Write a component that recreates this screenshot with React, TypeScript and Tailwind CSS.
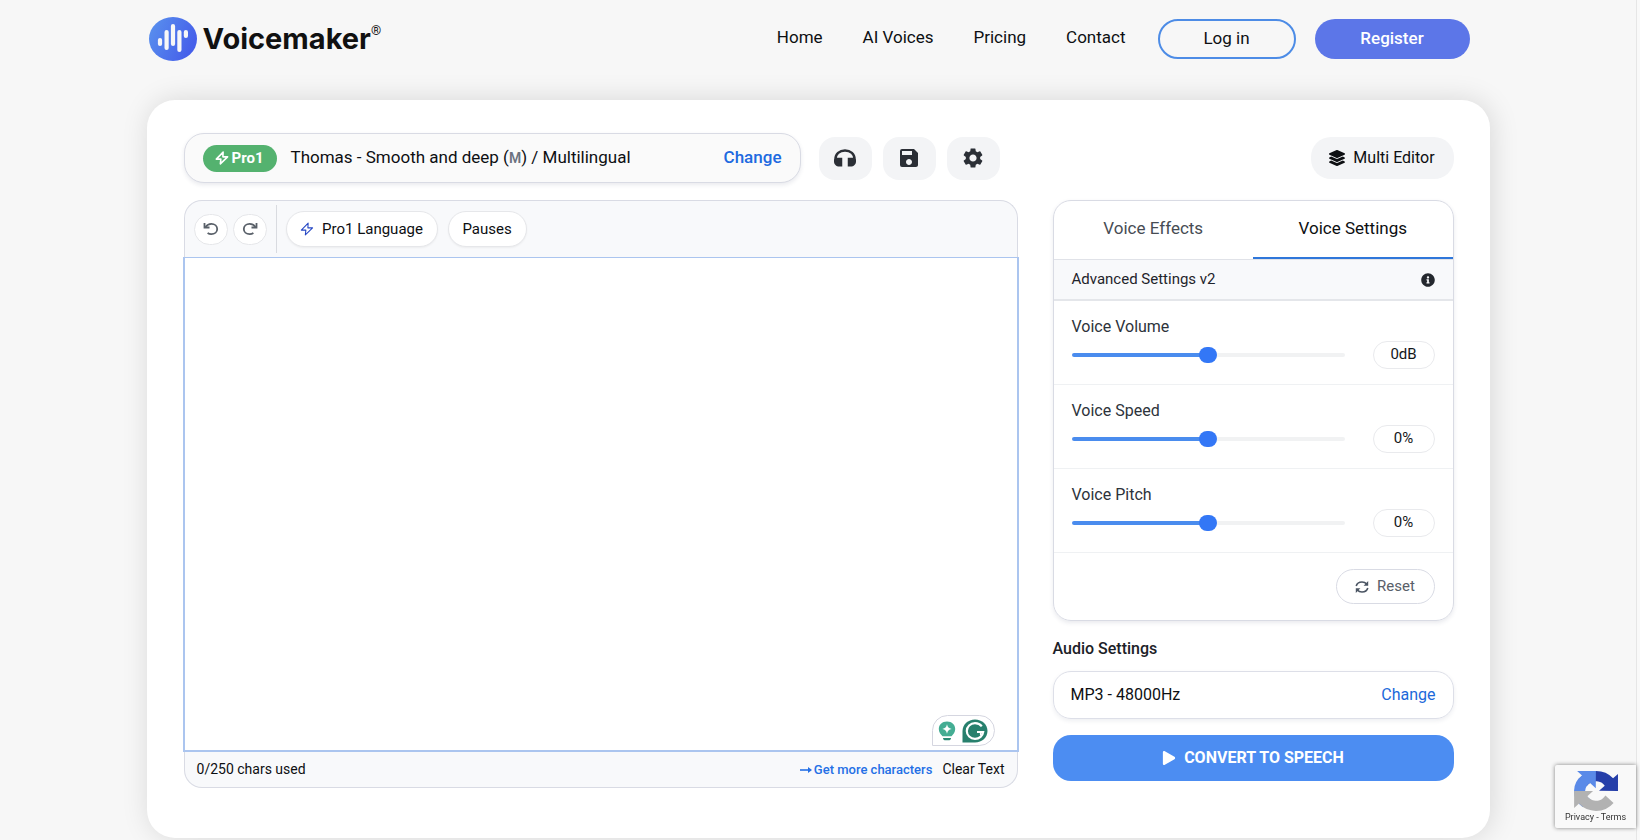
import { useState } from "react";
import type { ReactNode } from "react";
import { MdSave, MdSettings } from "react-icons/md";
import { FaLayerGroup, FaInfoCircle, FaPlay } from "react-icons/fa";

function LogoMark() {
  return (
    <svg viewBox="0 0 48 44" className="h-11 w-12" aria-hidden="true">
      <defs>
        <linearGradient id="mark" x1="0" y1="0" x2="1" y2="0.4">
          <stop offset="0" stopColor="#5a93ee" />
          <stop offset="1" stopColor="#4660ea" />
        </linearGradient>
      </defs>
      <ellipse cx="24" cy="22" rx="24" ry="22" fill="url(#mark)" />
      <g stroke="#f7f7f7" strokeWidth="4.2" strokeLinecap="round">
        <path d="M11 23v4" />
        <path d="M17.600 15v16" />
        <path d="M24 9v18" />
        <path d="M30.400 15v18" />
        <path d="M36.900 15v4" />
      </g>
    </svg>
  );
}

function Bolt({ className }: { className: string }) {
  return (
    <svg viewBox="0 0 16 16" className={className} fill="none" stroke="currentColor" strokeLinejoin="round" aria-hidden="true">
      <path d="M9.300 1.300 1.500 9.300h5.200l-.6 5.400 8.300-8H9z" />
    </svg>
  );
}

function HeadphonesIcon() {
  return (
    <svg viewBox="0 0 64 52" className="h-[18px] w-[22px]" aria-hidden="true">
      <path d="M4 36V30C4 15 16 4 32 4s28 11 28 26v6" fill="none" stroke="currentColor" strokeWidth="7" />
      <path d="M8 25h16v26h-8C6 51 0 44 0 36v-5zM56 25H40v26h8c10 0 16-7 16-15v-5z" fill="currentColor" />
    </svg>
  );
}

function UndoIcon({ flip }: { flip?: boolean }) {
  return (
    <svg viewBox="0 0 16 14" className={flip ? "h-3.5 w-4 -scale-x-100" : "h-3.5 w-4"} fill="none" stroke="#596069" strokeWidth="1.800" aria-hidden="true">
      <path d="M1.500 1v4.500H6.500" />
      <path d="M2.500 5C4 2.800 6 1.800 8.300 1.800c3.500 0 5.900 2.300 5.900 5.200s-2.400 5.200-5.900 5.200c-1.500 0-2.700-.4-3.700-1.100" />
    </svg>
  );
}

function RefreshIcon() {
  return (
    <svg viewBox="0 0 14 13" className="h-3.5 w-3.5" fill="none" stroke="#4b5563" strokeWidth="1.600" aria-hidden="true">
      <path d="M1.200 5.500C1.900 3 4.200 1.500 7 1.500c2 0 3.600.8 4.700 2.100" />
      <path d="M12.800 7.500c-.7 2.500-3 4-5.800 4-2 0-3.600-.8-4.700-2.100" />
      <path d="M13.200.6v4.600H8.600zM.8 12.400V7.800h4.600z" fill="#4b5563" stroke="none" />
    </svg>
  );
}

function BulbIcon() {
  return (
    <svg viewBox="0 0 18 20" className="h-5 w-4.5" aria-hidden="true">
      <path d="M9 .5C4 .5.8 3.800.8 8c0 3.400 2 5.300 3.700 7.200h9C15.200 13.300 17.200 11.400 17.200 8 17.200 3.800 14 .5 9 .5z" fill="#44ad93" />
      <path d="M9 3.300c.7 3 1.700 4 4.700 4.700-3 .7-4 1.700-4.700 4.700C8.300 9.700 7.300 8.700 4.300 8 7.300 7.300 8.300 6.300 9 3.300z" fill="#fff" />
      <path d="M5 17h8c0 1.500-1 2.300-2.500 2.300h-3C6 19.300 5 18.500 5 17z" fill="#2a8a74" />
    </svg>
  );
}

function GrammarIcon() {
  return (
    <svg viewBox="0 0 26 24" className="h-6 w-6.5" aria-hidden="true">
      <path d="M13 .5C20 .5 25.500 5.500 25.500 12S20 23.500 13 23.500H.5V12C.5 5.500 6 .5 13 .5z" fill="#27806d" />
      <path d="M19.800 7.300C18.200 5.200 15.800 4.200 13 4.200c-4.600 0-8.200 3.400-8.200 7.800s3.600 7.800 8.200 7.800c4.300 0 7.800-2.900 8.200-6.800h-6.200" fill="none" stroke="#fff" strokeWidth="2.200" />
      <path d="M18.800 12.500v3.800" stroke="#fff" strokeWidth="1.800" />
    </svg>
  );
}

function RecaptchaIcon() {
  return (
    <svg viewBox="0 0 64 64" className="h-10 w-11" preserveAspectRatio="none" aria-hidden="true">
      <path d="M64 31.950a32 32 0 0 0-.03-1.380V4.600l-7.180 7.180A31.950 31.950 0 0 0 32.060.060a31.940 31.940 0 0 0-25.430 12.600l11.770 11.900a15.600 15.600 0 0 1 4.770-5.350c2.060-1.600 4.970-2.920 8.900-2.920.47 0 .84.060 1.110.160 4.860.380 9.080 3.070 11.560 6.960l-8.330 8.330z" fill="#263fa9" />
      <path d="M31.860.060a32 32 0 0 0-1.380.03H4.520l7.180 7.180A31.950 31.950 0 0 0 0 32a31.940 31.940 0 0 0 12.600 25.430l11.900-11.770a15.600 15.600 0 0 1-5.350-4.770c-1.600-2.060-2.920-4.970-2.920-8.900 0-.47.060-.84.160-1.110.38-4.860 3.070-9.080 6.960-11.560l8.330 8.330z" fill="#5a8ae8" />
      <path d="M.130 31.950c0 .46.010.92.030 1.380V59.300l7.180-7.180A31.950 31.950 0 0 0 32.060 63.850a31.940 31.940 0 0 0 25.430-12.600L45.720 39.350a15.600 15.600 0 0 1-4.770 5.350c-2.060 1.600-4.970 2.920-8.900 2.920-.47 0-.84-.06-1.110-.16-4.860-.38-9.080-3.070-11.560-6.960l8.330-8.330z" fill="#b2b2b2" />
    </svg>
  );
}

function IconButton({ label, children }: { label: string; children: ReactNode }) {
  return (
    <button type="button" aria-label={label} className="flex h-[43px] w-[53px] items-center justify-center rounded-2xl bg-[#f3f4f6] text-[#2b2f36]">
      {children}
    </button>
  );
}

const sliders = [
  { id: "volume", label: "Voice Volume", unit: "dB" },
  { id: "speed", label: "Voice Speed", unit: "%" },
  { id: "pitch", label: "Voice Pitch", unit: "%" },
];

function SliderRow({ id, label, unit }: { id: string; label: string; unit: string }) {
  const [value, setValue] = useState(0);
  const percent = value + 50 + "%";
  return (
    <div className="flex h-[84px] flex-col justify-center border-b border-[#eff1f3] px-[18px]">
      <label htmlFor={id} className="text-base leading-5 text-[#2d333b]">
        {label}
      </label>
      <div className="mt-1 flex items-center justify-between gap-7">
        <input
          id={id}
          type="range"
          min={-50}
          max={50}
          value={value}
          onChange={(e) => setValue(Number(e.target.value))}
          style={{ backgroundImage: `linear-gradient(to right, #4a8cee ${percent}, #f1f2f3 ${percent})` }}
          className="h-1 min-w-0 flex-1 cursor-pointer appearance-none rounded-full [&::-webkit-slider-thumb]:h-4 [&::-webkit-slider-thumb]:w-[18px] [&::-webkit-slider-thumb]:appearance-none [&::-webkit-slider-thumb]:rounded-full [&::-webkit-slider-thumb]:bg-[#3377f6]"
        />
        <output htmlFor={id} className="flex h-7 w-[62px] items-center justify-center rounded-full border border-[#e9eaed] text-[15px] text-[#14171b]">
          {value}
          {unit}
        </output>
      </div>
    </div>
  );
}

function TabButton({ active, onSelect, children }: { active: boolean; onSelect: () => void; children: ReactNode }) {
  return (
    <button
      type="button"
      role="tab"
      aria-selected={active}
      onClick={onSelect}
      className={active ? "border-b-2 border-[#2f77da]" : "border-b-2 border-transparent text-[#474c54]"}
    >
      {children}
    </button>
  );
}

export default function App() {
  const [text, setText] = useState("");
  const [tab, setTab] = useState("settings");

  return (
    <div className="bg-[#f9f9f9] pr-[3px] font-['Roboto',sans-serif] text-[#0d0f12]">
      <div className="min-h-screen overflow-hidden border-r border-[#e6e6e6] bg-[#f7f7f7]">
        <header className="mx-auto flex h-[77px] w-full max-w-[1343px] items-center justify-between pr-5 pl-0.5">
          <a href="#home" className="flex items-center gap-1.5">
            <LogoMark />
            <span className="flex font-['Inter',sans-serif] text-[29px] leading-9 font-bold text-[#111]">
              Voicemaker
              <sup className="top-0 font-['Roboto',sans-serif] text-[13px] leading-5 font-normal">®</sup>
            </span>
          </a>
          <nav className="flex items-center text-[17px]">
            <div className="mr-8 flex gap-10 pb-0.5">
              <a href="#home">Home</a>
              <a href="#voices">AI Voices</a>
              <a href="#pricing">Pricing</a>
              <a href="#contact">Contact</a>
            </div>
            <a href="#login" className="flex h-10 w-[138px] items-center justify-center rounded-full border-2 border-[#4d8ce6]">
              Log in
            </a>
            <a href="#register" className="ml-[19px] flex h-10 w-[155px] items-center justify-center rounded-full bg-[#5c76e8] font-medium text-white">
              Register
            </a>
          </nav>
        </header>

        <main className="mx-auto mt-[23px] w-full max-w-[1343px] rounded-[28px] bg-white px-9 pt-[33px] pb-[50px] shadow-[2px_0_28px_rgba(0,0,0,0.13)]">
          <div className="flex items-center justify-between">
            <div className="flex items-center gap-[11px]">
              <div className="mr-[7px] ml-px flex h-[50px] w-[617px] items-center rounded-[20px] border border-[#d9dbe4] bg-[#fafafa] px-[18px] shadow-[0_2px_4px_rgba(40,50,90,0.1)]">
                <span className="flex h-[27px] w-[74px] items-center justify-center gap-0.5 rounded-full bg-[#54b26f] text-[15px] font-bold text-white">
                  <Bolt className="size-3.5 stroke-[1.800]" />
                  Pro1
                </span>
                <span className="ml-3.5 text-[17px]">
                  Thomas - Smooth and deep (<b className="text-[14px] font-semibold text-[#6b7280]">M</b>) / Multilingual
                </span>
                <button type="button" className="ml-auto text-[17px] font-medium text-[#2069e0]">
                  Change
                </button>
              </div>
              <IconButton label="Listen">
                <HeadphonesIcon />
              </IconButton>
              <IconButton label="Save">
                <MdSave className="size-6" />
              </IconButton>
              <IconButton label="Settings">
                <MdSettings className="size-6" />
              </IconButton>
            </div>
            <button type="button" className="flex h-[42px] w-[143px] items-center justify-center gap-2 rounded-[20px] bg-[#f3f4f6] text-base">
              <FaLayerGroup className="size-4" />
              Multi Editor
            </button>
          </div>

          <div className="mt-[17px] flex items-start gap-[34px]">
            <section className="min-w-0 flex-1">
              <div className="mx-px flex h-[57px] items-center rounded-t-[18px] border border-b-0 border-[#d9dbe4] bg-[#f8f9fb] pl-[9px] text-[15px]">
                <button type="button" aria-label="Undo" className="flex h-[31px] w-[34px] items-center justify-center rounded-full border border-[#e6e7ea] bg-white">
                  <UndoIcon />
                </button>
                <button type="button" aria-label="Redo" className="ml-[5px] flex h-[31px] w-[34px] items-center justify-center rounded-full border border-[#e6e7ea] bg-white">
                  <UndoIcon flip />
                </button>
                <div className="mx-[9px] h-12 w-px bg-[#d9dbe0]" />
                <button type="button" className="flex h-9 w-[152px] items-center justify-center gap-2 rounded-full border border-[#e6e7ea] bg-white shadow-xs">
                  <Bolt className="size-3.5 stroke-[1.200] text-[#2446c4]" />
                  Pro1 Language
                </button>
                <button type="button" className="ml-2.5 flex h-9 w-[79px] items-center justify-center rounded-full border border-[#e6e7ea] bg-white shadow-xs">
                  Pauses
                </button>
              </div>
              <div className="relative">
                <textarea
                  aria-label="Text to convert"
                  value={text}
                  maxLength={250}
                  onChange={(e) => setText(e.target.value)}
                  className="block h-[495px] w-full resize-none border-2 border-t border-[#abc5ef] bg-white p-4 text-base outline-none"
                />
                <div className="absolute right-6 bottom-1.5 flex h-[31px] w-[63px] items-center justify-center gap-1.5 rounded-full rounded-bl-none border border-[#d5d6e0] bg-white">
                  <BulbIcon />
                  <GrammarIcon />
                </div>
              </div>
              <div className="mx-px flex h-9 items-center rounded-b-[18px] border border-t-0 border-[#d9dbe4] bg-[#f8f9fb] px-3 text-[14px]">
                <span>{text.length}/250 chars used</span>
                <a href="#pricing" className="ml-auto flex items-center gap-0.5 text-[13px] font-medium text-[#2470e6]">
                  <svg viewBox="0 0 12 8" className="h-2 w-3" aria-hidden="true">
                    <path d="M0 4h9" stroke="currentColor" strokeWidth="1.600" />
                    <path d="M8 1l4 3-4 3z" fill="currentColor" />
                  </svg>
                  Get more characters
                </a>
                <button type="button" className="ml-2.5" onClick={() => setText("")}>
                  Clear Text
                </button>
              </div>
            </section>

            <aside className="w-[401px]">
              <div className="overflow-hidden rounded-[18px] border border-[#d9dbe4] shadow-[0_2px_4px_rgba(40,50,90,0.1)]">
                <div role="tablist" className="grid h-[59px] grid-cols-2 border-b border-[#e0e2e8] text-[17px]">
                  <TabButton active={tab === "effects"} onSelect={() => setTab("effects")}>
                    Voice Effects
                  </TabButton>
                  <TabButton active={tab === "settings"} onSelect={() => setTab("settings")}>
                    Voice Settings
                  </TabButton>
                </div>
                <div className="flex h-[41px] items-center justify-between border-b-2 border-[#e4e6ea] bg-[#f8f9fb] px-[18px] text-[15px] text-[#1f242b]">
                  Advanced Settings v2
                  <FaInfoCircle className="size-3.5 text-[#24282e]" />
                </div>
                {sliders.map((s) => (
                  <SliderRow key={s.id} {...s} />
                ))}
                <div className="flex h-[67px] items-center justify-end px-[18px]">
                  <button type="button" className="flex h-[35px] w-[99px] items-center justify-center gap-2 rounded-full border border-[#d9dbe4] text-[15px] text-[#596069]">
                    <RefreshIcon />
                    Reset
                  </button>
                </div>
              </div>
              <h2 className="mt-4 text-base leading-6 font-medium text-[#1c2127]">Audio Settings</h2>
              <div className="mt-2.5 flex h-12 items-center justify-between rounded-[18px] border border-[#dddfe8] px-[17px] text-base shadow-[0_2px_4px_rgba(40,50,90,0.08)]">
                <span>MP3 - 48000Hz</span>
                <button type="button" className="text-[#1c69da]">
                  Change
                </button>
              </div>
              <button type="button" className="mt-4 flex h-[46px] w-full items-center justify-center gap-2 rounded-[18px] bg-[#4c8df2] text-base font-bold text-white">
                <FaPlay className="size-3.5" />
                CONVERT TO SPEECH
              </button>
            </aside>
          </div>
        </main>
      </div>

      <div className="fixed right-1 bottom-3 flex h-[63px] w-[81px] flex-col items-center justify-center rounded-l-xs bg-[#f9f9f9] shadow-[0_0_4px_#808080]">
        <RecaptchaIcon />
        <div className="text-[9px] leading-3 text-[#333]">
          <a href="#privacy">Privacy</a> - <a href="#terms">Terms</a>
        </div>
      </div>
    </div>
  );
}
